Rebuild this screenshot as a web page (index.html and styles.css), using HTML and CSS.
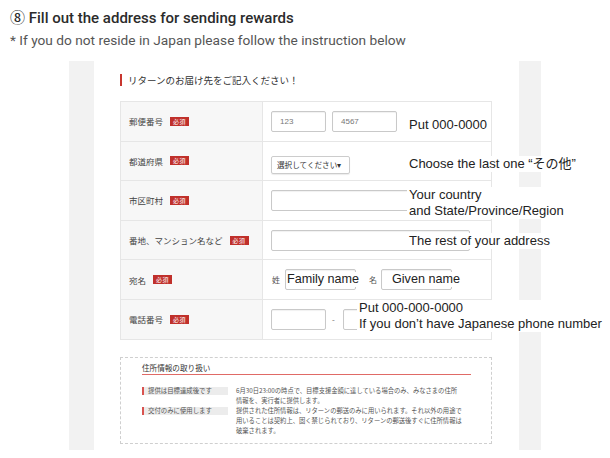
FILE: index.html
```html
<!DOCTYPE html>
<html lang="ja">
<head>
<meta charset="utf-8">
<title>Return address</title>
<link rel="stylesheet" href="styles.css">
</head>
<body>
<div class="page">
  <header class="intro">
    <h1>⑧ Fill out the address for sending rewards</h1>
    <p>* If you do not reside in Japan please follow the instruction below</p>
  </header>

  <div class="stage">
    <div class="sheet">
      <h2 class="form-title">リターンのお届け先をご記入ください！</h2>

      <div class="form-table">
        <div class="row">
          <div class="label">郵便番号<span class="req">必須</span></div>
          <div class="field">
            <span class="input zip1">123</span>
            <span class="input zip2">4567</span>
          </div>
        </div>
        <div class="row">
          <div class="label">都道府県<span class="req">必須</span></div>
          <div class="field">
            <span class="select">選択してください▾</span>
          </div>
        </div>
        <div class="row">
          <div class="label">市区町村<span class="req">必須</span></div>
          <div class="field">
            <span class="input wide"></span>
          </div>
        </div>
        <div class="row">
          <div class="label">番地、マンション名など<span class="req">必須</span></div>
          <div class="field">
            <span class="input wide"></span>
          </div>
        </div>
        <div class="row">
          <div class="label">宛名<span class="req">必須</span></div>
          <div class="field">
            <span class="prefix">姓</span>
            <span class="input name"><span class="name-text family">Family name</span></span>
            <span class="prefix given-prefix">名</span>
            <span class="input name"><span class="name-text given">Given name</span></span>
          </div>
        </div>
        <div class="row">
          <div class="label">電話番号<span class="req">必須</span></div>
          <div class="field">
            <span class="input tel"></span>
            <span class="dash">-</span>
            <span class="input tel"></span>
          </div>
        </div>
      </div>

      <section class="privacy">
        <h3 class="privacy-title">住所情報の取り扱い</h3>
        <div class="privacy-row">
          <div class="privacy-label">提供は目標達成後です</div>
          <div class="privacy-text">6月30日23:00の時点で、目標支援金額に達している場合のみ、みなさまの住所<br>情報を、実行者に提供します。</div>
        </div>
        <div class="privacy-row">
          <div class="privacy-label">交付のみに使用します</div>
          <div class="privacy-text">提供された住所情報は、リターンの郵送のみに用いられます。それ以外の用途で<br>用いることは契約上、固く禁じられており、リターンの郵送後すぐに住所情報は<br>破棄されます。</div>
        </div>
      </section>
    </div>
  </div>

  <div class="note note-zip">Put 000-0000</div>
  <div class="note note-pref">Choose the last one “その他”</div>
  <div class="note note-city">Your country<br>and State/Province/Region</div>
  <div class="note note-rest">The rest of your address</div>
  <div class="note note-tel">Put 000-000-0000<br>If you don’t have Japanese phone number</div>
</div>
</body>
</html>
```

FILE: styles.css
```css
html, body {
  margin: 0;
  padding: 0;
  background: #fff;
}

.page {
  position: relative;
  width: 610px;
  height: 458px;
  overflow: hidden;
  font-family: "Liberation Sans", "Noto Sans CJK JP", sans-serif;
}

.intro {
  padding: 8px 0 0 10px;
  height: 61px;
  box-sizing: border-box;
}

.intro h1 {
  margin: 0;
  font-family: Roboto, "Liberation Sans", "Noto Sans CJK JP", sans-serif;
  font-weight: 500;
  font-size: 15px;
  line-height: 20px;
  color: #2b2b2b;
}

.intro p {
  margin: 3px 0 0;
  font-family: Roboto, "Liberation Sans", sans-serif;
  font-size: 13.7px;
  line-height: 18px;
  color: #555;
}

.stage {
  margin-left: 69px;
  width: 472px;
  height: 389px;
  background: #f2f2f2;
  padding: 0 22px 0 25px;
  box-sizing: border-box;
}

.sheet {
  height: 100%;
  background: #fff;
  padding: 13px 27px 0 26px;
  box-sizing: border-box;
  font-family: "Noto Sans CJK JP", "Liberation Sans", sans-serif;
}

.form-title {
  margin: 0 0 15px;
  border-left: 2px solid #c8362f;
  padding-left: 6px;
  font-size: 9.5px;
  font-weight: 400;
  line-height: 12px;
  height: 12px;
  color: #333;
}

.form-table {
  border: 1px solid #e6e6e6;
  border-bottom: none;
}

.row {
  display: grid;
  grid-template-columns: 142px 1fr;
  height: 39.6px;
  border-bottom: 1px solid #e6e6e6;
  box-sizing: border-box;
}

.label {
  background: #f7f7f7;
  border-right: 1px solid #e6e6e6;
  display: flex;
  align-items: center;
  padding-left: 8px;
  font-size: 8.5px;
  color: #444;
  white-space: nowrap;
}

.req {
  display: inline-block;
  margin-left: 7px;
  background: #c0302b;
  color: #fff;
  font-size: 6px;
  line-height: 9px;
  height: 9px;
  padding: 0 3px;
  letter-spacing: 0.5px;
}

.field {
  display: flex;
  align-items: center;
  padding-left: 8px;
  font-size: 8px;
  color: #666;
}

.input {
  display: block;
  height: 21px;
  box-sizing: border-box;
  border: 1px solid #c9c9c9;
  border-radius: 2px;
  box-shadow: inset 0 1px 1px rgba(0, 0, 0, 0.06);
  background: #fff;
  padding-left: 8px;
  line-height: 19px;
  font-family: "Liberation Sans", sans-serif;
  font-size: 8px;
  color: #777;
}

.zip1 { width: 55px; }
.zip2 { width: 65px; margin-left: 6px; }
.wide { width: 199px; }
.tel { width: 55px; }

.select {
  display: block;
  width: 79px;
  height: 18px;
  margin-top: 9px;
  box-sizing: border-box;
  border: 1px solid #ccc;
  border-radius: 2px;
  box-shadow: 0 1px 1px rgba(0, 0, 0, 0.08);
  padding-left: 5px;
  line-height: 16px;
  font-size: 7.6px;
  color: #333;
  white-space: nowrap;
}

.prefix {
  font-size: 8px;
  color: #555;
  margin-left: 1px;
  width: 13px;
}

.given-prefix {
  margin-left: 13px;
  width: 12px;
}

.name {
  width: 71px;
  padding-left: 0;
  overflow: visible;
  white-space: nowrap;
}

.name-text {
  display: inline-block;
  background: #fff;
  font-family: "Liberation Sans", sans-serif;
  font-size: 12.6px;
  line-height: 15px;
  color: #222;
  position: relative;
  top: 1px;
}

.family { margin-left: 1px; }
.given { margin-left: 10px; }

.dash {
  margin: 0 8px 0 6px;
  color: #666;
  font-size: 8px;
}

.privacy {
  margin-top: 17px;
  border: 1px dashed #cfcfcf;
  height: 87px;
  box-sizing: border-box;
  padding: 5px 20px 0 21px;
}

.privacy-title {
  margin: 0 0 11px;
  font-size: 7.6px;
  font-weight: 400;
  line-height: 10px;
  padding-bottom: 1px;
  border-bottom: 1px solid #e06a66;
  color: #333;
}

.privacy-row {
  display: grid;
  grid-template-columns: 86px 1fr;
  column-gap: 8px;
  align-items: start;
}

.privacy-label {
  height: 8px;
  margin-top: 1px;
  background: #ececec;
  border-left: 2px solid #d9534f;
  padding-left: 4px;
  font-size: 6.4px;
  line-height: 8px;
  color: #555;
  white-space: nowrap;
}

.privacy-text {
  font-size: 6.3px;
  line-height: 10px;
  color: #555;
  white-space: nowrap;
}

.note {
  position: absolute;
  background: #fff;
  font-family: "Liberation Sans", "Noto Sans CJK JP", sans-serif;
  font-size: 13px;
  line-height: 16px;
  color: #222;
  white-space: nowrap;
}

.note-zip { left: 409px; top: 117px; }
.note-pref { left: 409px; top: 156px; padding-right: 4px; }
.note-city { left: 407px; top: 187px; padding-left: 2px; }
.note-rest { left: 409px; top: 233px; }
.note-tel { left: 357px; top: 300px; padding-left: 2px; }
```
